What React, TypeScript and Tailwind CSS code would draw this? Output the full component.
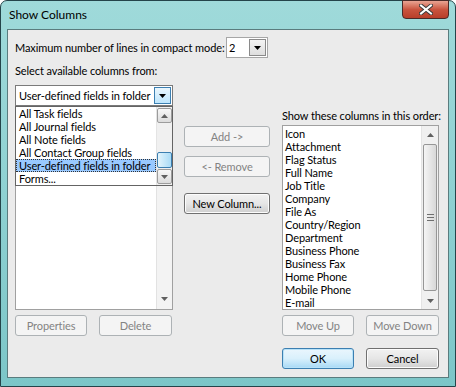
import React from "react";

const font = { fontFamily: "Lato, 'Noto Sans', sans-serif" };

const leftItems = [
  "All Task fields",
  "All Journal fields",
  "All Note fields",
  "All Contact Group fields",
  "User-defined fields in folder",
  "Forms...",
];

const rightItems = [
  "Icon",
  "Attachment",
  "Flag Status",
  "Full Name",
  "Job Title",
  "Company",
  "File As",
  "Country/Region",
  "Department",
  "Business Phone",
  "Business Fax",
  "Home Phone",
  "Mobile Phone",
  "E-mail",
];

function Arrow({ dir = "down", color = "#000" }: { dir?: "up" | "down"; color?: string }) {
  return (
    <svg width="7" height="4" viewBox="0 0 7 4">
      {dir === "down" ? <path d="M0 0h7L3.5 4z" fill={color} /> : <path d="M0 4h7L3.5 0z" fill={color} />}
    </svg>
  );
}

function Button({
  label,
  width,
  disabled,
  primary,
}: {
  label: string;
  width: string;
  disabled?: boolean;
  primary?: boolean;
}) {
  if (disabled) {
    return (
      <div className={`${width} h-[21px] flex items-center justify-center rounded-[3px] border border-[#adb2b5] bg-[#f4f4f4] text-[#838383] whitespace-nowrap`}>
        {label}
      </div>
    );
  }
  if (primary) {
    return (
      <div className={`${width} h-[21px] rounded-[3px] border border-[#3c7fb1] bg-gradient-to-b from-[#eaf6fd] via-[#d9f0fc] to-[#a7d9f5] shadow-[inset_0_0_0_1px_#b8e2f8] flex items-center justify-center text-black`}>
        {label}
      </div>
    );
  }
  return (
    <div className={`${width} h-[21px] rounded-[3px] border border-[#707070] bg-gradient-to-b from-[#f2f2f2] via-[#e6e6e6] to-[#cfcfcf] shadow-[inset_0_0_0_1px_#fcfcfc] flex items-center justify-center text-black whitespace-nowrap`}>
      {label}
    </div>
  );
}

function ScrollArrow({ dir, hot }: { dir: "up" | "down"; hot?: boolean }) {
  return (
    <div
      className={`h-[15px] flex items-center justify-center rounded-[2px] border ${
        hot ? "border-[#9c9c9c] bg-gradient-to-b from-[#f8f8f8] to-[#dcdcdc]" : "border-transparent"
      }`}
    >
      <Arrow dir={dir} color="#606060" />
    </div>
  );
}

export default function App() {
  return (
    <div
      className="w-[456px] h-[387px] flex flex-col rounded-t-[7px] border border-[#24444a] bg-gradient-to-b from-[#9fdada] via-[#8ed1d2] to-[#7cc6c8] text-[11px] leading-[15px] tracking-[-0.1px] text-black"
      style={font}
    >
      {/* title bar */}
      <div className="h-[28px] flex items-start">
        <div className="pl-[8px] pt-[6px] text-[12px] tracking-normal text-black">Show Columns</div>
        <div className="ml-auto mr-[6px] w-[47px] h-[19px] -mt-px rounded-b-[4px] border border-[#4a2a28] bg-gradient-to-b from-[#e8a493] via-[#c9543f] to-[#b83e2a] flex items-center justify-center">
          <svg width="14" height="11" viewBox="0 0 14 11">
            <path d="M2 1.5l10 8M12 1.5l-10 8" stroke="#3a3a3a" strokeWidth="4" strokeLinecap="square" />
            <path d="M2 1.5l10 8M12 1.5l-10 8" stroke="#fff" strokeWidth="2" strokeLinecap="square" />
          </svg>
        </div>
      </div>

      {/* client area */}
      <div className="ml-[6px] w-[442px] h-[349px] border border-[#5a7c7e] bg-[#ebebeb] pl-[7px] pt-[7px]">
        <div className="flex items-center h-[21px] whitespace-nowrap">
          <span className="w-[206px]">Maximum number of lines in compact mode:</span>
          <div className="ml-[5px] w-[42px] h-[21px] border border-[#a6a6a6] bg-white flex items-center">
            <span className="pl-[2px] flex-1">2</span>
            <div className="w-[17px] h-[17px] mr-px border border-[#8a8a8a] bg-gradient-to-b from-[#f4f4f4] to-[#dedede] flex items-center justify-center">
              <Arrow />
            </div>
          </div>
        </div>

        <div className="mt-[5px] h-[15px]">Select available columns from:</div>

        <div className="mt-[7px] flex">
          {/* left column */}
          <div className="w-[158px] relative">
            <div className="h-[21px] border border-[#7a7a7a] bg-white flex items-center whitespace-nowrap">
              <span className="pl-[3px] flex-1">User-defined fields in folder</span>
              <div className="w-[17px] h-[17px] mr-px border border-[#3c7fb1] bg-gradient-to-b from-[#eaf6fd] to-[#bee6fd] flex items-center justify-center">
                <Arrow />
              </div>
            </div>
            <div className="h-[204px] border border-[#a0a0a0] border-t-0 bg-white flex justify-end">
              <div className="w-[16px] h-full bg-[#f3f3f3] border-l border-[#e2e2e2] flex flex-col justify-end pb-[3px]">
                <ScrollArrow dir="down" />
              </div>
            </div>
            <div className="mt-[5px] flex gap-[12px]">
              <Button label="Properties" width="w-[72px]" disabled />
              <Button label="Delete" width="w-[73px]" disabled />
            </div>

            {/* open dropdown */}
            <div className="absolute left-0 top-[21px] w-[158px] h-[80px] border border-[#646464] bg-white flex">
              <div className="flex-1">
                {leftItems.map((item) => (
                  <div
                    key={item}
                    className={`h-[13px] leading-[13px] pl-[3px] whitespace-nowrap ${
                      item === "User-defined fields in folder"
                        ? "bg-[#99c9ff] outline-1 outline-dotted outline-[#333] -outline-offset-1"
                        : ""
                    }`}
                  >
                    {item}
                  </div>
                ))}
              </div>
              <div className="w-[16px] bg-[#f0f0f0] border-l border-[#e4e4e4] flex flex-col pt-px pb-px">
                <ScrollArrow dir="up" hot />
                <div className="flex-1 flex flex-col justify-end">
                  <div className="h-[16px] mb-px rounded-[2px] border border-[#3c7fb1] bg-gradient-to-r from-[#e3f4fc] to-[#a9dbf6]" />
                </div>
                <ScrollArrow dir="down" hot />
              </div>
            </div>
          </div>

          {/* middle column */}
          <div className="ml-[11px] w-[86px] pt-[41px] flex flex-col">
            <Button label="Add ->" width="w-[86px]" disabled />
            <div className="mt-[9px]">
              <Button label="<- Remove" width="w-[86px]" disabled />
            </div>
            <div className="mt-[16px]">
              <Button label="New Column..." width="w-[86px]" />
            </div>
          </div>

          {/* right column */}
          <div className="ml-[12px] w-[157px] pt-[23px]">
            <div className="h-[15px] whitespace-nowrap">Show these columns in this order:</div>
            <div className="mt-[2px] h-[185px] border border-[#a0a0a0] bg-white flex">
              <div className="flex-1 pl-[2px] pt-px">
                {rightItems.map((item) => (
                  <div key={item} className="h-[13px] leading-[13px] whitespace-nowrap">
                    {item}
                  </div>
                ))}
              </div>
              <div className="w-[17px] bg-[#f0f0f0] border-l border-[#e4e4e4] flex flex-col py-px">
                <ScrollArrow dir="up" />
                <div className="flex-1 px-px py-[2px]">
                  <div className="h-full rounded-[2px] border border-[#969696] bg-gradient-to-r from-[#f5f5f5] to-[#d8d8d8] flex flex-col items-center justify-center gap-[2px]">
                    <div className="w-[7px] h-px bg-[#6f6f6f]" />
                    <div className="w-[7px] h-px bg-[#6f6f6f]" />
                    <div className="w-[7px] h-px bg-[#6f6f6f]" />
                  </div>
                </div>
                <ScrollArrow dir="down" />
              </div>
            </div>
            <div className="mt-[5px] flex gap-[12px]">
              <Button label="Move Up" width="w-[72px]" disabled />
              <Button label="Move Down" width="w-[73px]" disabled />
            </div>
            <div className="mt-[12px] flex gap-[12px]">
              <Button label="OK" width="w-[72px]" primary />
              <Button label="Cancel" width="w-[73px]" />
            </div>
          </div>
        </div>
      </div>
    </div>
  );
}
